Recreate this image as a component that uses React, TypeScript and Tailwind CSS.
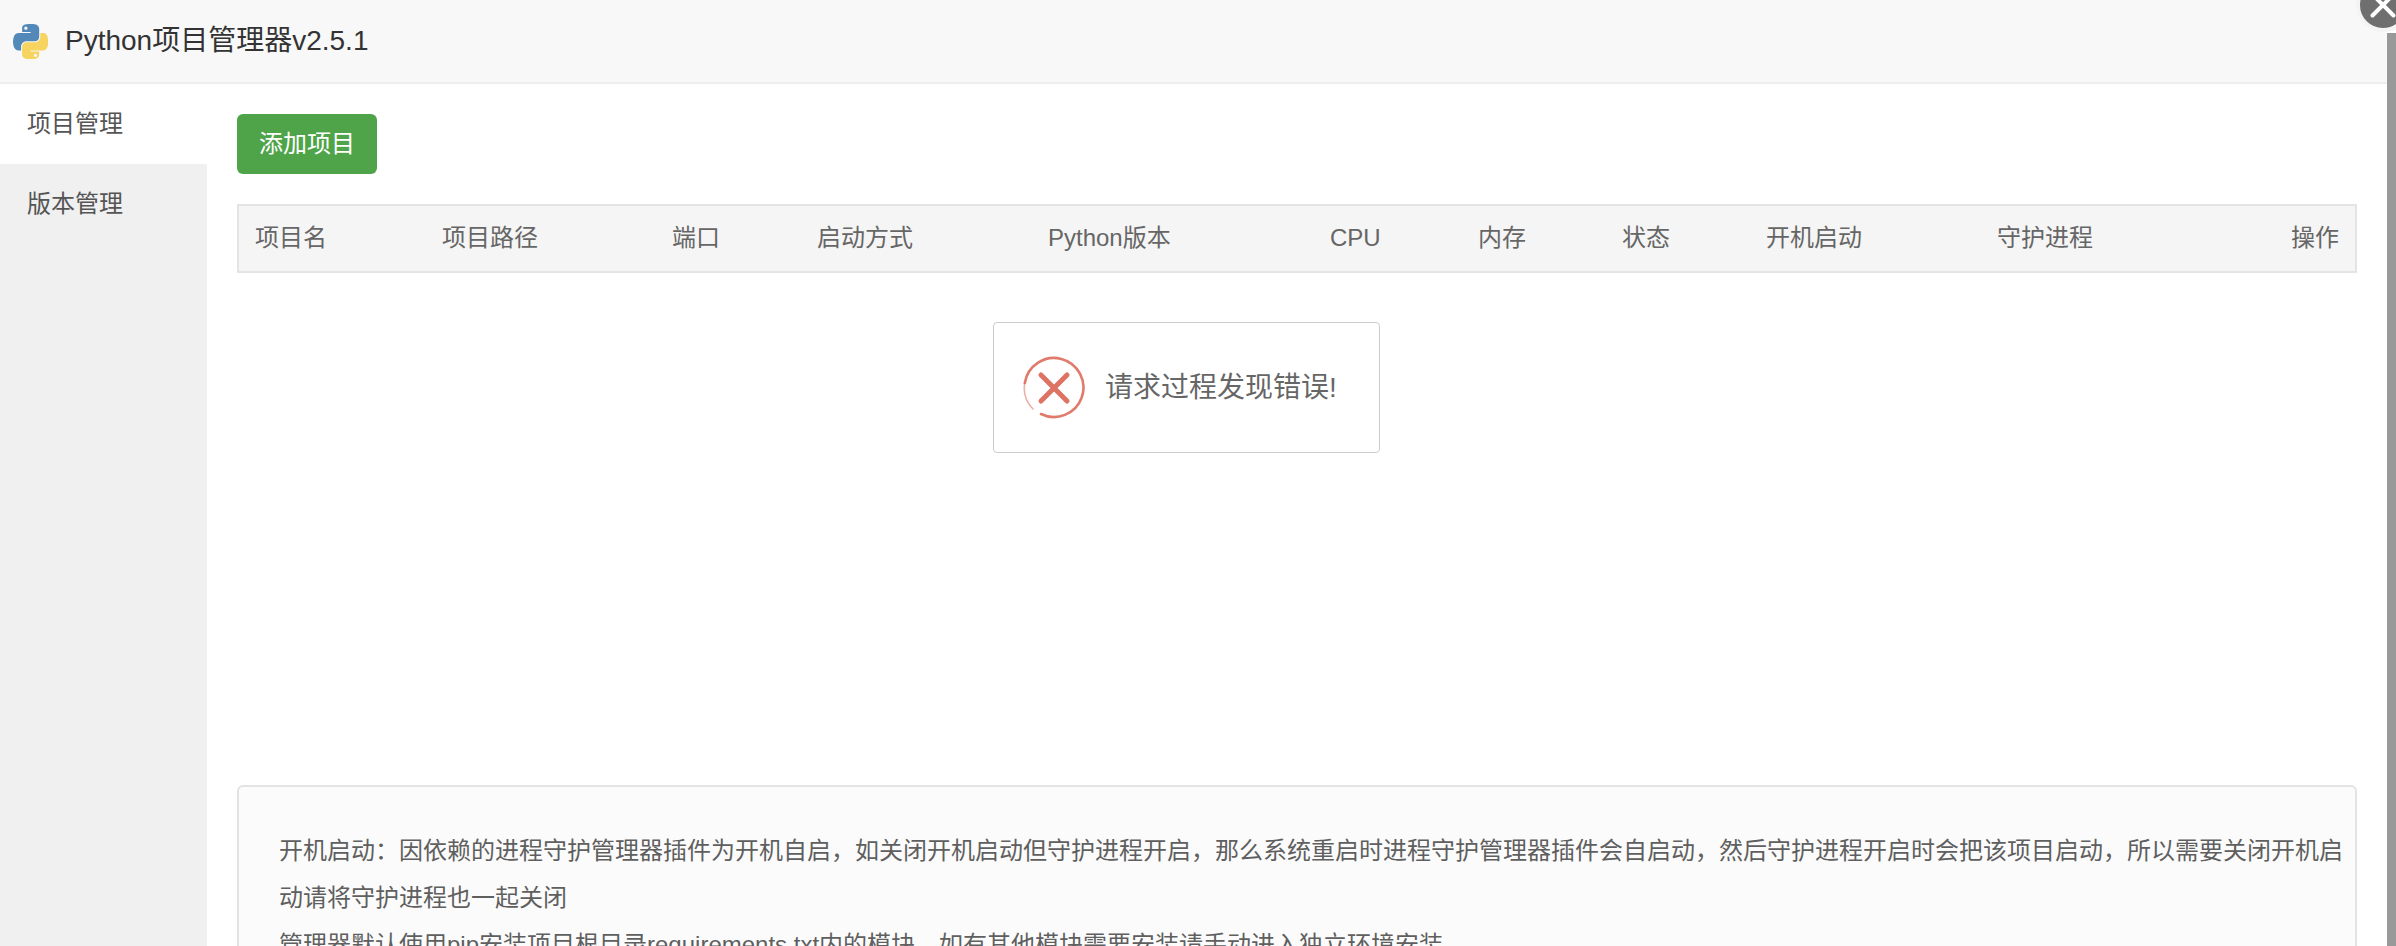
import React from 'react';

const font = { fontFamily: '"Liberation Sans", "Noto Sans CJK SC", sans-serif' };

// cell widths come from the reference columns
const columns = [
  { label: '项目名', width: 'w-[188px]' },
  { label: '项目路径', width: 'w-[230px]' },
  { label: '端口', width: 'w-[145px]' },
  { label: '启动方式', width: 'w-[231px]' },
  { label: 'Python版本', width: 'w-[282px]' },
  { label: 'CPU', width: 'w-[148px]' },
  { label: '内存', width: 'w-[144px]' },
  { label: '状态', width: 'w-[144px]' },
  { label: '开机启动', width: 'w-[231px]' },
  { label: '守护进程', width: 'w-[200px]' },
  { label: '操作', width: '' },
];

function PythonLogo() {
  return (
    <svg viewBox="0 0 110 110" className="w-[35px] h-[35px] shrink-0">
      <path
        fill="#5289b8"
        d="M54.919 0.001c-4.584.022-8.961.413-12.813 1.095C30.76 3.099 28.7 7.295 28.7 15.032v10.219h26.813v3.406H18.638c-7.793 0-14.616 4.684-16.75 13.594-2.462 10.213-2.571 16.586 0 27.25 1.905 7.938 6.457 13.594 14.25 13.594h9.219v-12.25c0-8.85 7.657-16.656 16.75-16.656h26.781c7.454 0 13.406-6.138 13.406-13.625V15.032c0-7.272-6.135-12.735-13.406-13.937C64.282.334 59.502-.02 54.919.001zM40.419 8.22c2.77 0 5.031 2.299 5.031 5.125 0 2.816-2.262 5.094-5.031 5.094-2.78 0-5.031-2.277-5.031-5.094 0-2.826 2.252-5.125 5.031-5.125z"
      />
      <path
        fill="#f6d45f"
        d="M85.638 28.657v11.906c0 9.231-7.826 17-16.75 17H42.106c-7.336 0-13.406 6.278-13.406 13.625v25.531c0 7.266 6.319 11.54 13.406 13.625 8.487 2.496 16.626 2.947 26.781 0 6.75-1.954 13.406-5.888 13.406-13.625V86.501H55.513v-3.406H95.7c7.793 0 10.696-5.436 13.406-13.594 2.799-8.399 2.68-16.476 0-27.25-1.926-7.757-5.604-13.594-13.406-13.594zM70.575 93.313c2.78 0 5.031 2.277 5.031 5.094 0 2.826-2.252 5.125-5.031 5.125-2.77 0-5.031-2.299-5.031-5.125 0-2.816 2.262-5.094 5.031-5.094z"
      />
    </svg>
  );
}

function ErrorIcon() {
  return (
    <svg viewBox="0 0 64 64" className="w-[64px] h-[64px] shrink-0" fill="none" stroke="#da6452" strokeLinecap="round">
      {/* ring fades out towards the lower left */}
      <path d="M19 58 A 29.5 29.5 0 1 0 2.8 27" strokeWidth="2.6" opacity="0.85" />
      <path d="M2.8 27 A 29.5 29.5 0 0 0 11 53" strokeWidth="1.6" opacity="0.5" />
      <path d="M19 19 L45 45 M45 19 L19 45" strokeWidth="5" opacity="0.9" />
    </svg>
  );
}

export default function App() {
  return (
    <div className="relative flex h-[946px] w-full overflow-hidden bg-white text-[24px]" style={font}>
      <div className="flex w-[2387px] shrink-0 flex-col">
        <header className="flex h-[84px] shrink-0 items-center gap-[17px] border-b-2 border-[#eeeeee] bg-[#f8f8f8] pl-[13px] text-[28px] text-[#333333]">
          <PythonLogo />
          <span>Python项目管理器v2.5.1</span>
        </header>
        <div className="flex min-h-0 flex-1">
          <aside className="w-[207px] shrink-0 bg-[#f0f0f0] text-[#555555]">
            <div className="flex h-[80px] items-center bg-white pl-[27px]">项目管理</div>
            <div className="flex h-[80px] items-center pl-[27px]">版本管理</div>
          </aside>
          <main className="min-w-0 flex-1 px-[30px] pt-[30px]">
            <button className="h-[60px] w-[140px] rounded-[6px] bg-[#4fa44a] text-white">添加项目</button>
            <div className="mt-[30px] h-[581px]">
              <table className="w-full table-fixed border-collapse">
                <thead>
                  <tr className="h-[67px] border-2 border-[#e4e4e4] bg-[#f5f5f5] text-[#666666]">
                    {columns.map((col, i) => (
                      <th
                        key={col.label}
                        className={`${col.width} px-[16px] pb-[2px] font-normal ${i === columns.length - 1 ? 'text-right' : 'text-left'}`}
                      >
                        {col.label}
                      </th>
                    ))}
                  </tr>
                </thead>
              </table>
            </div>
            <div className="rounded-[6px] border-2 border-[#e3e3e3] bg-[#fbfbfb] pl-[40px] pr-[6px] pt-[40px] leading-[47px] text-[#5f5f5f]">
              <p>
                开机启动：因依赖的进程守护管理器插件为开机自启，如关闭开机启动但守护进程开启，那么系统重启时进程守护管理器插件会自启动，然后守护进程开启时会把该项目启动，所以需要关闭开机启动请将守护进程也一起关闭
              </p>
              <p>管理器默认使用pip安装项目根目录requirements.txt内的模块，如有其他模块需要安装请手动进入独立环境安装</p>
            </div>
          </main>
        </div>
      </div>
      <div className="mt-[33px] w-[9px] bg-[#999999]" />

      {/* error toast */}
      <div className="absolute left-[993px] top-[322px] flex h-[131px] w-[387px] items-center gap-[19px] rounded-[4px] border-[1.5px] border-[#cccccc] bg-white pl-[28px] text-[28px] text-[#666666]">
        <ErrorIcon />
        <span>请求过程发现错误!</span>
      </div>

      {/* modal close button, clipped by the window corner */}
      <div className="absolute left-[2356px] top-[-22px] flex h-[54px] w-[54px] items-center justify-center rounded-full border-4 border-[#f4f4f4] bg-[#6f6f6f]">
        <svg viewBox="0 0 24 24" className="h-[28px] w-[28px]" stroke="#ffffff" strokeWidth="3.4" strokeLinecap="round">
          <path d="M3 3 L21 21 M21 3 L3 21" />
        </svg>
      </div>
    </div>
  );
}
